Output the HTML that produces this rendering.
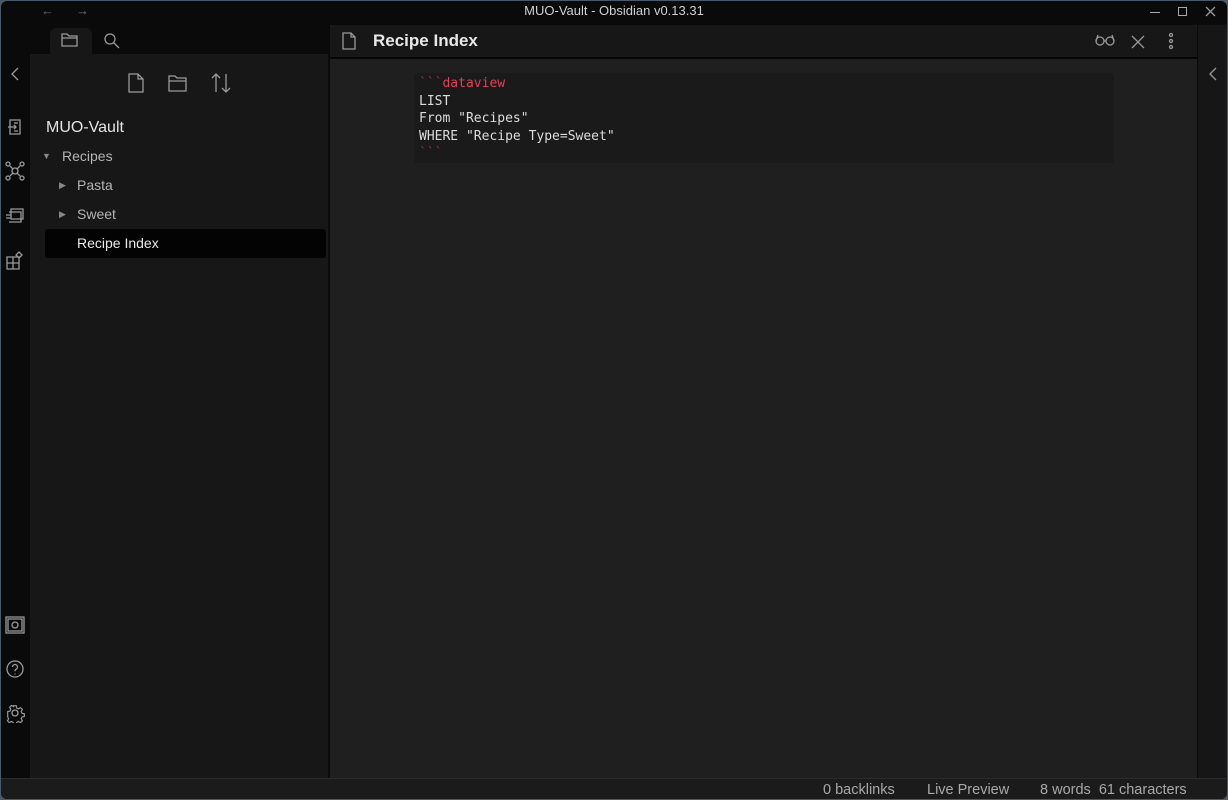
<!DOCTYPE html><html><head><style>
*{box-sizing:border-box;margin:0;padding:0}
body{width:1228px;height:800px;background:#4a5a6a;font-family:"Liberation Sans",sans-serif;overflow:hidden;position:relative}
.a{position:absolute}
svg{position:absolute;fill:none;stroke:#9a9a9a;stroke-width:1.3}
.mono{font-family:"DejaVu Sans Mono","Liberation Mono",monospace;font-size:13px;color:#dcdcdc;position:absolute;left:419px}
</style></head><body>
<div class="a" style="left:1px;top:1px;width:1226px;height:798px;background:#0a0a0a;border-radius:6px 6px 6px 6px"></div>
<div class="a" style="left:0;top:3px;width:1228px;text-align:center;color:#cfcfcf;font-size:13px">MUO-Vault - Obsidian v0.13.31</div>
<div class="a" style="left:41px;top:3px;color:#666;font-size:13px">←</div>
<div class="a" style="left:76px;top:3px;color:#777;font-size:13px">→</div>
<div class="a" style="left:1150px;top:12px;width:10px;height:1px;background:#aaa"></div>
<div class="a" style="left:1178px;top:7px;width:9px;height:9px;border:1px solid #aaa"></div>
<svg style="left:1205px;top:6px" width="11" height="11" viewBox="0 0 11 11"><path d="M1 1l9 9M10 1L1 10"/></svg>
<!-- sidebar -->
<div class="a" style="left:30px;top:54px;width:298px;height:724px;background:#171717"></div>
<div class="a" style="left:50px;top:28px;width:42px;height:27px;background:#171717;border-radius:6px 6px 0 0"></div>
<svg style="left:60px;top:31px" width="20" height="18" viewBox="0 0 20 18"><path d="M2 3h5l2 2h8v10H2z M2 7h15"/></svg>
<svg style="left:103px;top:32px" width="18" height="18" viewBox="0 0 18 18"><circle cx="7" cy="7" r="5"/><path d="M11 11l5 5"/></svg>
<svg style="left:127px;top:73px" width="18" height="20" viewBox="0 0 18 20"><path d="M2 1h9l5 5v13H2z M11 1v5h5"/></svg>
<svg style="left:167px;top:73px" width="22" height="20" viewBox="0 0 22 20"><path d="M2 3h6l2 2h9v13H2z M2 8h17"/></svg>
<svg style="left:210px;top:72px" width="22" height="22" viewBox="0 0 22 22"><path d="M6 2v18M2 6l4-4 4 4M16 2v18M12 16l4 4 4-4"/></svg>
<div class="a" style="left:46px;top:119px;color:#e4e4e4;font-size:16px">MUO-Vault</div>
<div class="a" style="left:42px;top:151px;color:#888;font-size:9px">▼</div>
<div class="a" style="left:62px;top:148px;color:#b4b4b4;font-size:14px">Recipes</div>
<div class="a" style="left:59px;top:180px;color:#888;font-size:9px">▶</div>
<div class="a" style="left:77px;top:177px;color:#b4b4b4;font-size:14px">Pasta</div>
<div class="a" style="left:59px;top:209px;color:#888;font-size:9px">▶</div>
<div class="a" style="left:77px;top:206px;color:#b4b4b4;font-size:14px">Sweet</div>
<div class="a" style="left:45px;top:229px;width:281px;height:29px;background:#030303;border-radius:3px"></div>
<div class="a" style="left:77px;top:235px;color:#e8e8e8;font-size:14px">Recipe Index</div>
<!-- ribbon -->
<svg style="left:9px;top:66px" width="12" height="16" viewBox="0 0 12 16"><path d="M9 2L3 8l6 6"/></svg>
<svg style="left:6px;top:118px" width="18" height="18" viewBox="0 0 18 18"><path d="M4 2h10v14H4z M2 9h8M8 7l2 2-2 2M8 5h4M8 13h4"/></svg>
<svg style="left:5px;top:161px" width="20" height="20" viewBox="0 0 20 20"><circle cx="10" cy="10" r="3"/><circle cx="3" cy="3" r="2"/><circle cx="17" cy="3" r="2"/><circle cx="3" cy="17" r="2"/><circle cx="17" cy="17" r="2"/><path d="M5 5l3 3M15 5l-3 3M5 15l3-3M15 15l-3-3"/></svg>
<svg style="left:5px;top:206px" width="20" height="18" viewBox="0 0 20 18"><path d="M6 3h12v10H6z M4 6h12v10H4 M1 9h5M1 12h5"/></svg>
<svg style="left:5px;top:248px" width="20" height="22" viewBox="0 0 20 22"><path d="M2 9h12v12H2z M2 15h12M8 9v12M14 4l3 3-3 3-3-3z"/></svg>
<svg style="left:5px;top:616px" width="20" height="18" viewBox="0 0 20 18"><path d="M1 1h18v16H1z M3 3h14v12H3z"/><circle cx="10" cy="9" r="3"/></svg>
<svg style="left:5px;top:659px" width="20" height="20" viewBox="0 0 20 20"><circle cx="10" cy="10" r="8"/><path d="M7.5 8a2.5 2.5 0 1 1 3.5 2.3c-1 .5-1 1-1 2M10 14.5v1"/></svg>
<svg style="left:5px;top:703px" width="20" height="20" viewBox="0 0 20 20"><circle cx="10" cy="10" r="3"/><path d="M8.5 2h3l.5 2.5 2 1 2.3-1.3 2 2-1.3 2.3 1 2 2.5.5v3l-2.5.5-1 2 1.3 2.3-2 2-2.3-1.3-2 1-.5 2.5h-3l-.5-2.5-2-1-2.3 1.3-2-2 1.3-2.3-1-2L2 11.5v-3l2.5-.5 1-2L4.2 3.7l2-2L8.5 3z" transform="scale(.9) translate(1 1)"/></svg>
<!-- editor -->
<div class="a" style="left:330px;top:25px;width:867px;height:753px;background:#1f1f1f"></div>
<div class="a" style="left:330px;top:25px;width:867px;height:34px;background:#171717;border-bottom:2px solid #050505;border-radius:4px 4px 0 0"></div>
<svg style="left:341px;top:32px" width="16" height="18" viewBox="0 0 16 18"><path d="M2 1h8l4 4v12H2z M10 1v4h4"/></svg>
<div class="a" style="left:373px;top:31px;color:#e8e8e8;font-size:17px;font-weight:bold">Recipe Index</div>
<svg style="left:1095px;top:34px" width="20" height="12" viewBox="0 0 20 12"><circle cx="5" cy="7" r="4"/><circle cx="15" cy="7" r="4"/><path d="M9 7h2M1 7l2-6M19 7l-2-6"/></svg>
<svg style="left:1131px;top:35px" width="14" height="14" viewBox="0 0 14 14"><path d="M1 1l12 12M13 1L1 13"/></svg>
<svg style="left:1167px;top:32px" width="8" height="18" viewBox="0 0 8 18"><circle cx="4" cy="3" r="1.5"/><circle cx="4" cy="9" r="1.5"/><circle cx="4" cy="15" r="1.5"/></svg>
<div class="a" style="left:414px;top:73px;width:700px;height:90px;background:#1a1a1a;border-radius:4px"></div>
<div class="mono" style="top:76px"><span style="color:#a03040">&#96;&#96;&#96;</span><span style="color:#e0405a">dataview</span></div>
<div class="mono" style="top:94px">LIST</div>
<div class="mono" style="top:111px">From "Recipes"</div>
<div class="mono" style="top:129px">WHERE "Recipe Type=Sweet"</div>
<div class="mono" style="top:146px;color:#a03040">&#96;&#96;&#96;</div>
<!-- right ribbon -->
<div class="a" style="left:1198px;top:25px;width:29px;height:753px;background:#161616"></div>
<svg style="left:1207px;top:66px" width="12" height="16" viewBox="0 0 12 16"><path d="M9 2L3 8l6 6"/></svg>
<!-- status -->
<div class="a" style="left:1px;top:778px;width:1226px;height:21px;background:#1b1b1b;border-top:1px solid #2c2c2c;border-radius:0 0 6px 6px"></div>
<div class="a" style="left:823px;top:782px;color:#a8a8a8;font-size:14.5px">0 backlinks</div>
<div class="a" style="left:927px;top:782px;color:#a8a8a8;font-size:14.5px">Live Preview</div>
<div class="a" style="left:1040px;top:782px;color:#a8a8a8;font-size:14.5px">8 words&nbsp; 61 characters</div>
</body></html>
